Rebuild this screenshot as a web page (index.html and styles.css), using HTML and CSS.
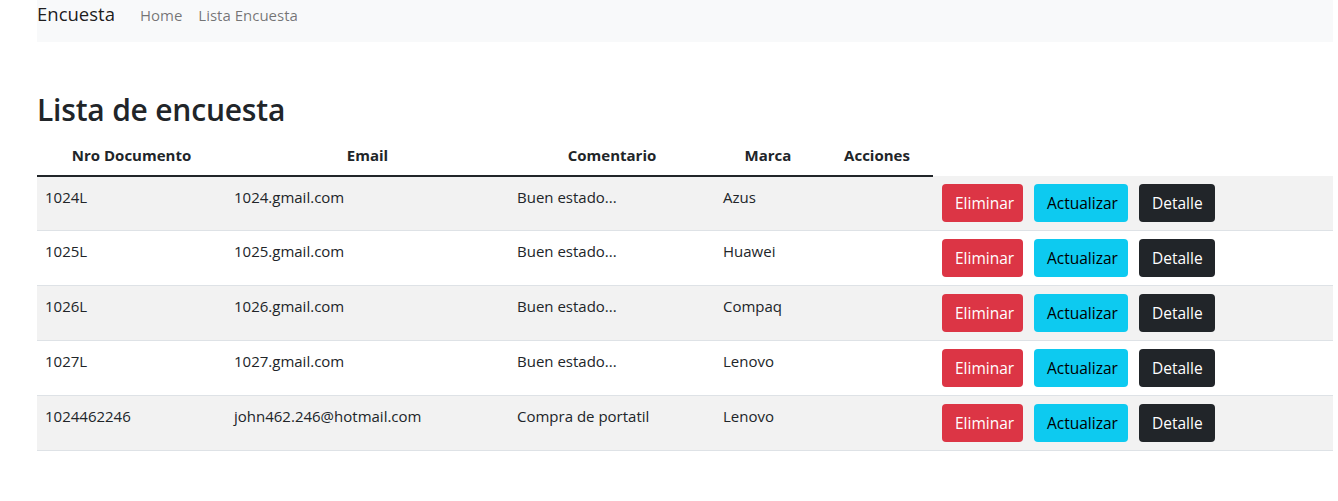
FILE: index.html
```html
<!DOCTYPE html>
<html lang="es">
<head>
<meta charset="utf-8">
<title>Encuesta</title>
<link rel="stylesheet" href="styles.css">
</head>
<body>
<div class="page">
  <nav class="navbar">
    <a class="brand" href="#">Encuesta</a>
    <a class="nav-link" href="#">Home</a>
    <a class="nav-link" href="#">Lista Encuesta</a>
  </nav>
  <h2 class="title">Lista de encuesta</h2>
  <table class="table">
    <colgroup>
      <col class="c1"><col class="c2"><col class="c3"><col class="c4"><col class="c5"><col class="c6">
    </colgroup>
    <thead>
      <tr>
        <th>Nro Documento</th>
        <th>Email</th>
        <th>Comentario</th>
        <th>Marca</th>
        <th>Acciones</th>
      </tr>
    </thead>
    <tbody>
      <tr>
        <td>1024L</td><td>1024.gmail.com</td><td>Buen estado...</td><td>Azus</td><td></td>
        <td class="actions"><button class="btn danger">Eliminar</button><button class="btn info">Actualizar</button><button class="btn dark">Detalle</button></td>
      </tr>
      <tr>
        <td>1025L</td><td>1025.gmail.com</td><td>Buen estado...</td><td>Huawei</td><td></td>
        <td class="actions"><button class="btn danger">Eliminar</button><button class="btn info">Actualizar</button><button class="btn dark">Detalle</button></td>
      </tr>
      <tr>
        <td>1026L</td><td>1026.gmail.com</td><td>Buen estado...</td><td>Compaq</td><td></td>
        <td class="actions"><button class="btn danger">Eliminar</button><button class="btn info">Actualizar</button><button class="btn dark">Detalle</button></td>
      </tr>
      <tr>
        <td>1027L</td><td>1027.gmail.com</td><td>Buen estado...</td><td>Lenovo</td><td></td>
        <td class="actions"><button class="btn danger">Eliminar</button><button class="btn info">Actualizar</button><button class="btn dark">Detalle</button></td>
      </tr>
      <tr>
        <td>1024462246</td><td>john462.246@hotmail.com</td><td>Compra de portatil</td><td>Lenovo</td><td></td>
        <td class="actions"><button class="btn danger">Eliminar</button><button class="btn info">Actualizar</button><button class="btn dark">Detalle</button></td>
      </tr>
    </tbody>
  </table>
</div>
</body>
</html>
```
FILE: styles.css
```css
* { box-sizing: border-box; }
html, body { margin: 0; padding: 0; background: #fff; }
body {
  font-family: "Open Sans", "Noto Sans", sans-serif;
  font-size: 15px;
  line-height: 24px;
  color: #212529;
}
.page {
  width: 1296px;
  margin-left: 37px;
}
.navbar {
  height: 42px;
  background: #f8f9fa;
  display: flex;
  align-items: baseline;
  padding-top: 2px;
}
.brand {
  font-size: 18.5px;
  line-height: 24px;
  color: rgba(0,0,0,.9);
  text-decoration: none;
  margin-right: 25px;
}
.nav-link {
  font-size: 15px;
  color: rgba(0,0,0,.55);
  text-decoration: none;
  margin-right: 16px;
}
.title {
  font-size: 30px;
  font-weight: 600;
  letter-spacing: -0.2px;
  line-height: 38px;
  margin: 49px 0 6px;
}
.table {
  width: 1296px;
  border-collapse: collapse;
  table-layout: fixed;
}
.c1 { width: 189px; }
.c2 { width: 283px; }
.c3 { width: 206px; }
.c4 { width: 106px; }
.c5 { width: 112px; }
.c6 { width: 400px; }
.table th {
  font-weight: 700;
  text-align: center;
  padding: 8px;
  border-bottom: 2px solid #212529;
}
.table td {
  padding: 8px;
  vertical-align: top;
  border-bottom: 1px solid #dee2e6;
}
.table tbody tr:nth-child(odd) td { background: #f2f2f2; }
.actions { white-space: nowrap; padding-left: 9px !important; }
.btn {
  font-family: inherit;
  font-size: 15.5px;
  line-height: 24px;
  padding: 6px 12px;
  border: 1px solid transparent;
  border-radius: 4px;
  margin-right: 11px;
  height: 38px;
  cursor: pointer;
}
.btn.danger { background: #dc3545; color: #fff; width: 81px; }
.btn.info { background: #0dcaf0; color: #000; width: 94px; }
.btn.dark { background: #212529; color: #fff; width: 76px; }
```
